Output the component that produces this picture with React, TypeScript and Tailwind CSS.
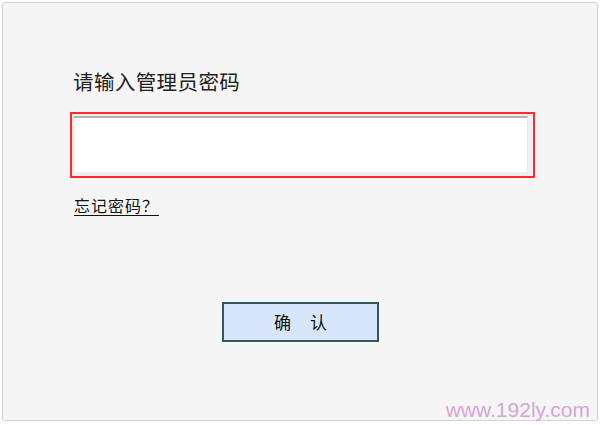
import { useState } from 'react'

const cjk = { fontFamily: '"Noto Sans CJK SC", "Noto Sans", sans-serif' }

export default function App() {
  const [password, setPassword] = useState('')

  return (
    <div className="relative w-[600px] h-[425px] bg-white pt-[2px] pl-[2px] pr-[2px] pb-[4px]" style={cjk}>
      <div className="flex flex-col h-full w-full border border-[#d4d4d4] rounded-[3px] bg-[#f5f5f5] pl-[67px] pr-[62px]">
        {/* Title */}
        <h1 className="mt-[64px] ml-[3px] text-[20.5px] leading-[28px] tracking-[0.4px] text-[#222] font-normal">
          请输入管理员密码
        </h1>

        {/* Password field */}
        <div className="mt-[17px] h-[66px] border-2 border-[#ff2b2b] bg-[#efefef] pt-[2px] pl-[1px] pr-[5px] pb-[3px]">
          <input
            type="password"
            value={password}
            onChange={e => setPassword(e.target.value)}
            className="block w-full h-full bg-white border-t-2 border-t-[#b4b4b4] border-l border-l-[#e2e2e2] border-r border-r-[#e8e8e8] border-b border-b-[#ececec] outline-none px-2 text-[16px]"
          />
        </div>

        {/* Forgot link */}
        <a
          href="#"
          className="mt-[17px] self-start ml-[4px] text-[16px] leading-[20px] tracking-[1px] text-[#111] underline underline-offset-[3px]"
        >
          忘记密码？
        </a>

        {/* Confirm button */}
        <button
          type="button"
          className="mt-[87px] self-start ml-[152px] w-[157px] h-[40px] bg-[#d7e6fb] border-2 border-[#2f5a5a] text-[17px] text-[#111]"
        >
          确<span className="inline-block w-[19px]" />认
        </button>
      </div>

      {/* Watermark */}
      <div
        className="absolute right-[10px] bottom-[3px] text-[21px] leading-[24px] text-[#d4a6d8]"
        style={{ fontFamily: '"Liberation Sans", Arial, sans-serif' }}
      >
        www.192ly.com
      </div>
    </div>
  )
}
